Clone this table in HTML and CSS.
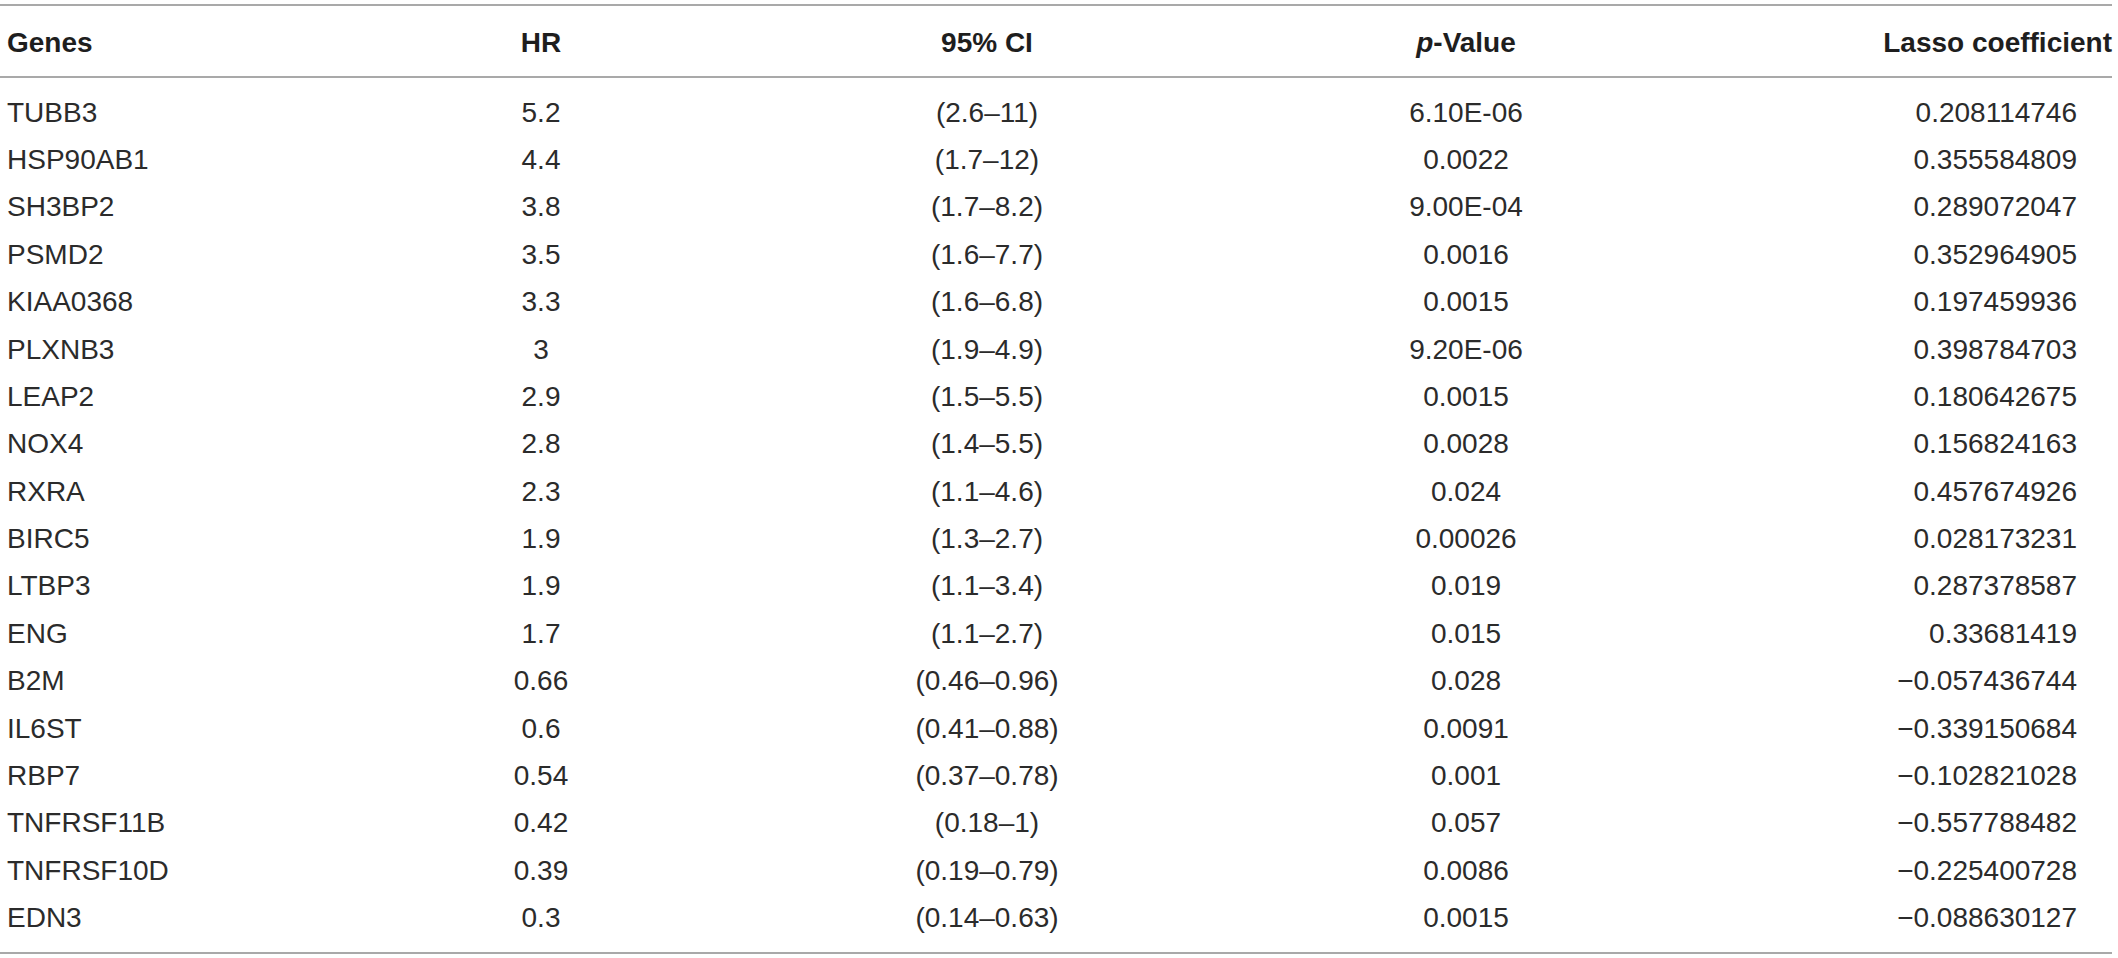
FILE: index.html
```html
<!DOCTYPE html>
<html lang="en">
<head>
<meta charset="utf-8">
<title>Genes table</title>
<link rel="stylesheet" href="styles.css">
</head>
<body>
<div class="table">
  <div class="row head">
    <div class="c gene">Genes</div>
    <div class="c mid">HR</div>
    <div class="c mid">95% CI</div>
    <div class="c mid"><i>p</i>-Value</div>
    <div class="c coef-h">Lasso coefficient</div>
  </div>
  <div class="body">
    <div class="row"><div class="c gene">TUBB3</div><div class="c mid">5.2</div><div class="c mid">(2.6–11)</div><div class="c mid">6.10E-06</div><div class="c coef">0.208114746</div></div>
    <div class="row"><div class="c gene">HSP90AB1</div><div class="c mid">4.4</div><div class="c mid">(1.7–12)</div><div class="c mid">0.0022</div><div class="c coef">0.355584809</div></div>
    <div class="row"><div class="c gene">SH3BP2</div><div class="c mid">3.8</div><div class="c mid">(1.7–8.2)</div><div class="c mid">9.00E-04</div><div class="c coef">0.289072047</div></div>
    <div class="row"><div class="c gene">PSMD2</div><div class="c mid">3.5</div><div class="c mid">(1.6–7.7)</div><div class="c mid">0.0016</div><div class="c coef">0.352964905</div></div>
    <div class="row"><div class="c gene">KIAA0368</div><div class="c mid">3.3</div><div class="c mid">(1.6–6.8)</div><div class="c mid">0.0015</div><div class="c coef">0.197459936</div></div>
    <div class="row"><div class="c gene">PLXNB3</div><div class="c mid">3</div><div class="c mid">(1.9–4.9)</div><div class="c mid">9.20E-06</div><div class="c coef">0.398784703</div></div>
    <div class="row"><div class="c gene">LEAP2</div><div class="c mid">2.9</div><div class="c mid">(1.5–5.5)</div><div class="c mid">0.0015</div><div class="c coef">0.180642675</div></div>
    <div class="row"><div class="c gene">NOX4</div><div class="c mid">2.8</div><div class="c mid">(1.4–5.5)</div><div class="c mid">0.0028</div><div class="c coef">0.156824163</div></div>
    <div class="row"><div class="c gene">RXRA</div><div class="c mid">2.3</div><div class="c mid">(1.1–4.6)</div><div class="c mid">0.024</div><div class="c coef">0.457674926</div></div>
    <div class="row"><div class="c gene">BIRC5</div><div class="c mid">1.9</div><div class="c mid">(1.3–2.7)</div><div class="c mid">0.00026</div><div class="c coef">0.028173231</div></div>
    <div class="row"><div class="c gene">LTBP3</div><div class="c mid">1.9</div><div class="c mid">(1.1–3.4)</div><div class="c mid">0.019</div><div class="c coef">0.287378587</div></div>
    <div class="row"><div class="c gene">ENG</div><div class="c mid">1.7</div><div class="c mid">(1.1–2.7)</div><div class="c mid">0.015</div><div class="c coef">0.33681419</div></div>
    <div class="row"><div class="c gene">B2M</div><div class="c mid">0.66</div><div class="c mid">(0.46–0.96)</div><div class="c mid">0.028</div><div class="c coef">−0.057436744</div></div>
    <div class="row"><div class="c gene">IL6ST</div><div class="c mid">0.6</div><div class="c mid">(0.41–0.88)</div><div class="c mid">0.0091</div><div class="c coef">−0.339150684</div></div>
    <div class="row"><div class="c gene">RBP7</div><div class="c mid">0.54</div><div class="c mid">(0.37–0.78)</div><div class="c mid">0.001</div><div class="c coef">−0.102821028</div></div>
    <div class="row"><div class="c gene">TNFRSF11B</div><div class="c mid">0.42</div><div class="c mid">(0.18–1)</div><div class="c mid">0.057</div><div class="c coef">−0.557788482</div></div>
    <div class="row"><div class="c gene">TNFRSF10D</div><div class="c mid">0.39</div><div class="c mid">(0.19–0.79)</div><div class="c mid">0.0086</div><div class="c coef">−0.225400728</div></div>
    <div class="row"><div class="c gene">EDN3</div><div class="c mid">0.3</div><div class="c mid">(0.14–0.63)</div><div class="c mid">0.0015</div><div class="c coef">−0.088630127</div></div>
  </div>
</div>
</body>
</html>
```
FILE: styles.css
```css
html, body {
  margin: 0;
  padding: 0;
  background: #ffffff;
}

body {
  padding-top: 4px;
  font-family: "Liberation Sans", Arial, Helvetica, sans-serif;
  font-size: 28px;
  color: #2b2b2b;
}

.table {
  width: 2112px;
  border-top: 2px solid #a9a9a9;
  border-bottom: 2px solid #a9a9a9;
}

.row {
  display: grid;
  grid-template-columns: 361px 360px 532px 426px 433px;
  height: 47.4px;
  line-height: 47.4px;
  white-space: nowrap;
}

.head {
  font-weight: bold;
  color: #1e1e1e;
  box-sizing: content-box;
  padding-top: 12.6px;
  padding-bottom: 10px;
  border-bottom: 2px solid #a9a9a9;
}

.body {
  padding-top: 10.6px;
  padding-bottom: 10.2px;
}

.c.gene {
  padding-left: 7px;
  text-align: left;
}

.c.mid {
  text-align: center;
}

.c.coef-h {
  text-align: right;
}

.c.coef {
  text-align: right;
  padding-right: 35px;
}
```
